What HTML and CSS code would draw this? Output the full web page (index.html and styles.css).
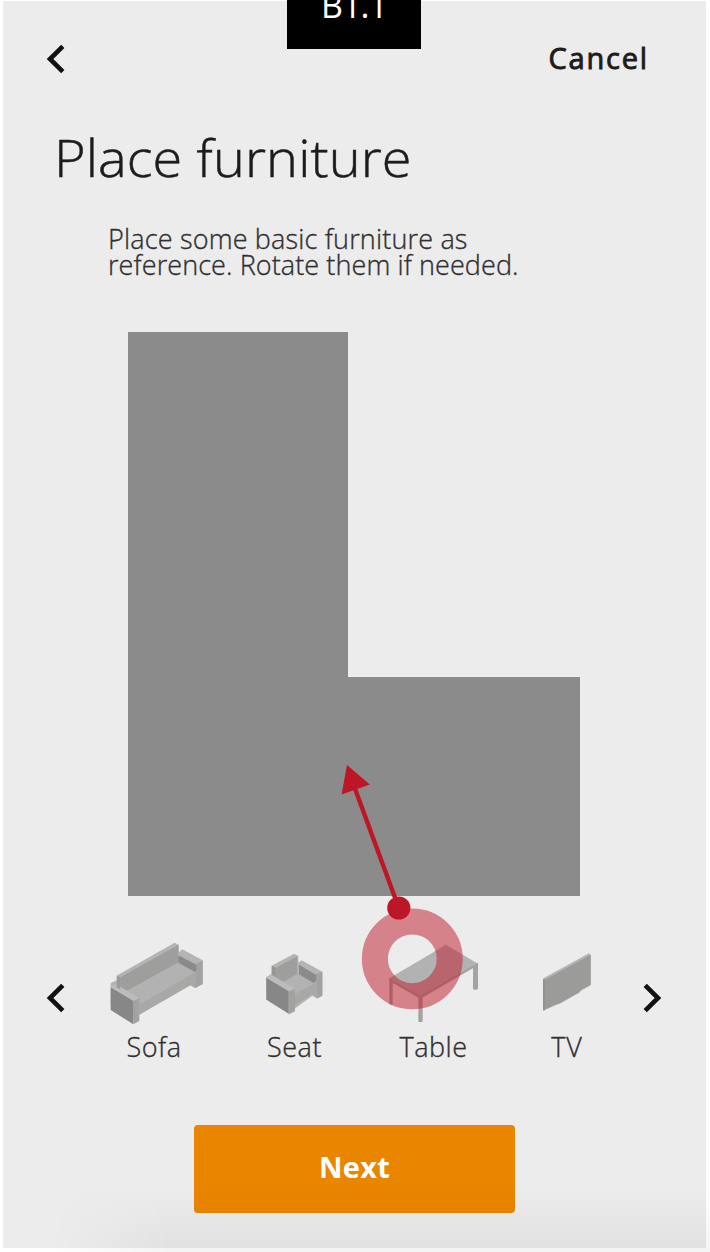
FILE: index.html
```html
<!DOCTYPE html>
<html lang="en">
<head>
<meta charset="utf-8">
<title>Place furniture</title>
<link rel="stylesheet" href="styles.css">
</head>
<body>
<main class="screen">
  <header class="topbar">
    <svg class="chevron" viewBox="0 0 20 30"><path d="M16.8 2.4 4 15l12.8 12.6"/></svg>
    <span class="cancel">Cancel</span>
  </header>
  <h1 class="title"><span>Place furniture</span></h1>
  <p class="intro"><span class="line-one">Place some basic furniture as</span><span class="line-two">reference. Rotate them if needed.</span></p>
  <svg class="room" viewBox="0 0 452 564"><path d="M0 0H220V345H452V564H0Z"/></svg>
  <section class="picker">
    <svg class="chevron prev" viewBox="0 0 20 30"><path d="M16.8 2.4 4 15l12.8 12.6"/></svg>
    <div class="item sofa">
      <svg viewBox="0 0 390 300">
        <path fill="#b4b4b4" d="M82 136 254 38l13 7v22l10-9 61 33v71l-22 12-15-8-152 88-17 16-70-45v-66l20-9z"/>
        <path fill="#9e9e9c" d="M91 142 264 45v53L105 186l-14-8z"/>
        <path fill="#b2b2b2" d="m105 186 159-88 54 29-170 99v-20z"/>
        <path fill="#8a8a8a" d="m265 76 57 30v16l-7 4-50-28z"/>
        <path fill="#a8a8a7" d="m148 224 170-99v50l-17-9-153 87z"/>
        <path fill="#878787" d="m62 172 68 38v73l-68-43z"/>
        <path fill="#bcbcbc" d="m62 172 17-9 69 42-18 8z"/>
        <path fill="#a2a2a1" d="m130 213 18-8v68l-18 10zM319 102l19-10v70l-21 11z"/>
        <path fill="#9a9a99" d="m80 136 11 6v36l-11-5z"/>
      </svg>
      <span>Sofa</span>
    </div>
    <div class="item seat">
      <svg viewBox="0 0 300 300">
        <path fill="#b4b4b4" d="m65 107 67-36 13 7v20l10-7 62 34v72l-17 8-13-8-51 38-16 16-71-45v-65l16-10z"/>
        <path fill="#9e9e9c" d="m78 114 64-36v54l-50 29-14-9z"/>
        <path fill="#b2b2b2" d="m92 161 50-29 55 29-61 34v-15z"/>
        <path fill="#8a8a8a" d="m147 104 53 32v16l-10 7-43-26z"/>
        <path fill="#a8a8a7" d="m135 193 62-35v44l-10-10-52 35z"/>
        <path fill="#878787" d="m49 143 67 39v69l-67-42z"/>
        <path fill="#bcbcbc" d="m49 143 16-9 70 43-19 7z"/>
        <path fill="#a2a2a1" d="m116 184 19-7v67l-19 9zM198 133l19-8v72l-17 9z"/>
        <path fill="#969695" d="m65 107 12 6v29l-12-8z"/>
      </svg>
      <span>Seat</span>
    </div>
    <div class="item table">
      <svg viewBox="0 0 300 300">
        <path fill="#a3a3a2" d="m19 145 10 5v74H19zM106 198h13v78h-13zM272 108l13-6v74l-7 4-8-3v-63z"/>
        <path fill="#b2b2b2" d="M19 145 189 44l96 57-173 99z"/>
        <path fill="#a2a2a1" d="m19 145 93 52v9l-93-53zM112 197l173-99v8l-173 100z"/>
      </svg>
      <span>Table</span>
    </div>
    <div class="item tv">
      <svg viewBox="0 0 240 300">
        <path fill="#b4b4b4" d="m40 145 137-75 5 4v92l-29 16-5 6-60 34-8 2-40 18z"/>
        <path fill="#9b9b99" d="m45 149 137-75v90l-30 16-5 7-58 33-9 3-35 15z"/>
        <path fill="#929292" d="M39 147h6v94h-6z"/>
      </svg>
      <span>TV</span>
    </div>
    <svg class="chevron next-arrow" viewBox="0 0 20 30"><path d="M3.2 2.4 16 15 3.2 27.6"/></svg>
  </section>
  <button class="next"><span>Next</span></button>
</main>
<div class="tag"><span>B1.1</span></div>
<svg class="gesture" viewBox="0 0 170 330">
  <circle class="ring" cx="82.3" cy="208.8" r="37.4"/>
  <path class="shaft" d="M68.8 158 24 36"/>
  <circle class="dot" cx="68.8" cy="158" r="11.6"/>
  <path class="dot" d="m17 15 22.8 19.4-28.2 10.2z"/>
</svg>
<div class="shade"></div>
</body>
</html>
```
FILE: styles.css
```css
body {
  margin: 0;
  width: 710px;
  height: 1252px;
  position: relative;
  overflow: hidden;
  background: #fff;
  font-family: "Open Sans", sans-serif;
  color: #1c1c1c;
}
.screen {
  box-sizing: border-box;
  width: 703px;
  height: 1247px;
  margin: 1px 0 0 3px;
  float: left;
  display: flex;
  flex-direction: column;
  background: #ececec;
}
.topbar {
  height: 116px;
  padding: 0 58px 0 43px;
  display: flex;
  align-items: center;
  justify-content: space-between;
  flex: none;
}
.chevron {
  width: 20px;
  height: 30px;
  flex: none;
  fill: none;
  stroke: #111;
  stroke-width: 4.6;
}
.cancel {
  font: 400 29px/38px "Open Sans", sans-serif;
  letter-spacing: 1.8px;
  margin: -2px -1px 0 0;
  -webkit-text-stroke: .9px currentColor;
}
.title {
  margin: 0 0 0 51px;
  font-weight: 300;
  font-size: 52px;
  line-height: 79px;
  height: 109px;
  letter-spacing: .1px;
  -webkit-text-stroke: .5px currentColor;
  white-space: nowrap;
}
.title span { display: inline-block; transform: scaleX(1.04); transform-origin: left; }
.intro {
  margin: 0 0 0 105px;
  height: 106px;
  display: flex;
  flex-direction: column;
  font-weight: 300;
  font-size: 27px;
  line-height: 26px;
  letter-spacing: .17px;
  -webkit-text-stroke: .35px currentColor;
  white-space: nowrap;
  color: #303030;
}
.line-two { letter-spacing: .09px; }
.room {
  width: 452px;
  height: 564px;
  margin-left: 125px;
  flex: none;
  fill: #8b8b8b;
}
.picker {
  height: 174px;
  padding: 34px 0 0 43px;
  box-sizing: border-box;
  display: flex;
  flex: none;
}
.prev, .next-arrow { margin-top: 53px; }
.item {
  display: flex;
  flex-direction: column;
  align-items: center;
  flex: none;
  font-weight: 300;
  font-size: 27px;
  line-height: 34px;
  letter-spacing: .5px;
  -webkit-text-stroke: .35px currentColor;
  color: #303030;
}
.item svg { width: 100%; height: 100px; flex: none; }
.sofa { width: 130px; margin-left: 24px; }
.seat { width: 100px; margin-left: 30px; }
.table { width: 100px; margin-left: 33px; }
.tv { width: 80px; margin-left: 47px; }
.next-arrow { margin-left: 32px; }
.sofa span { margin-right: 2px; }
.seat span { margin-right: 11px; }
.table span { margin-right: -1px; }
.tv span { margin-right: 6px; letter-spacing: 1px; }
.next {
  width: 321px;
  height: 88px;
  margin: 55px 0 0 191px;
  padding: 0 0 4px;
  border: 0;
  border-radius: 4px;
  background: #ea8500;
  color: #fff;
  font: 700 29px/40px "Open Sans", sans-serif;
  letter-spacing: .2px;
  flex: none;
}
.tag {
  position: absolute;
  left: 287px;
  top: 0;
  width: 134px;
  height: 49px;
  overflow: hidden;
  background: #000;
  color: #fff;
  text-align: center;
  font: 400 34px/48px "Open Sans", sans-serif;
  letter-spacing: -1px;
}
.tag span { display: block; margin-top: -19px; }
.gesture {
  position: absolute;
  left: 330px;
  top: 750px;
  width: 170px;
  height: 330px;
}
.ring { fill: none; stroke: #bd1727; stroke-opacity: .5; stroke-width: 26; }
.shaft { stroke: #bd1727; stroke-width: 4.4; }
.dot { fill: #bd1727; }
.shade {
  position: absolute;
  left: 0;
  bottom: 0;
  width: 710px;
  height: 66px;
  background: linear-gradient(to bottom, rgba(0,0,0,0), rgba(0,0,0,.042));
  -webkit-mask-image: linear-gradient(to right, transparent 50px, #000 170px);
  mask-image: linear-gradient(to right, transparent 50px, #000 170px);
  pointer-events: none;
}
```
